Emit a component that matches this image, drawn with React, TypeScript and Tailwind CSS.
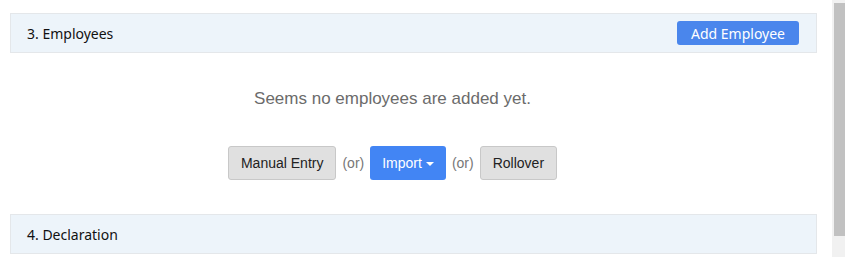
export default function App() {
  return (
    <div className="flex h-[257px] w-[845px] overflow-hidden bg-white">
      <div className="flex-1 pl-[10px] pr-[15px] pt-[13px]">
        <section>
          <div className="flex h-[40px] items-center justify-between border border-[#e4e7ea] bg-[#edf4fa] pl-[16px] pr-[17px] font-['Noto_Sans',sans-serif] text-[14px] text-[#111]">
            <h2>3. Employees</h2>
            <button className="h-[24px] w-[122px] rounded-[3px] bg-[#4a86ec] text-[14px] text-white">
              Add Employee
            </button>
          </div>
          <div className="flex flex-col items-center pb-[34px] pr-[42px] pt-[35px] font-['Liberation_Sans',Arial,sans-serif]">
            <p className="text-[17px] leading-[22px] text-[#6b6b6b]">
              Seems no employees are added yet.
            </p>
            <div className="mt-[36px] flex items-center gap-[6px] text-[14px]">
              <button className="h-[34px] rounded-[3px] border border-[#c8c8c8] bg-[#e0e0e0] px-[12px] text-[#222]">
                Manual Entry
              </button>
              <span className="text-[#777]">(or)</span>
              <button className="flex h-[34px] items-center gap-[4px] rounded-[3px] bg-[#4285f4] px-[12px] text-white">
                Import
                <span className="mt-[2px] border-l-[4px] border-r-[4px] border-t-[4px] border-l-transparent border-r-transparent border-t-white" />
              </button>
              <span className="text-[#777]">(or)</span>
              <button className="h-[34px] rounded-[3px] border border-[#c8c8c8] bg-[#e0e0e0] px-[12px] text-[#222]">
                Rollover
              </button>
            </div>
          </div>
        </section>
        <section>
          <div className="flex h-[40px] items-center border border-[#e4e7ea] bg-[#edf4fa] pl-[16px] font-['Noto_Sans',sans-serif] text-[14px] text-[#111]">
            <h2>4. Declaration</h2>
          </div>
        </section>
      </div>
      <div className="flex w-[13px] flex-col bg-[#f1f1f1]">
        <div className="ml-[2px] mt-[3px] h-[233px] bg-[#c1c1c1]" />
      </div>
    </div>
  );
}
